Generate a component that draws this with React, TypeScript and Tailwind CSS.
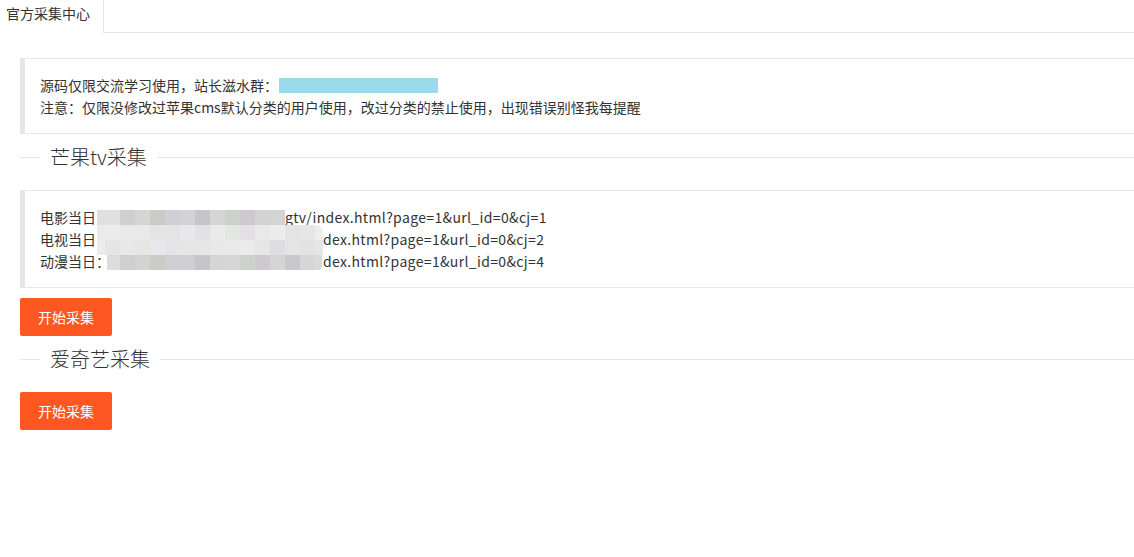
import React from "react";

const FONT = { fontFamily: '"Noto Sans CJK SC", "Liberation Sans", sans-serif' };

const row1 = [
  "bg-[#dfe0e2] w-[8px]",
  "bg-[#e0e0de] w-[15px]",
  "bg-[#cfcfcf] w-[15px]",
  "bg-[#d5d5d3] w-[15px]",
  "bg-[#cacac6] w-[15px]",
  "bg-[#cfcfd5] w-[15px]",
  "bg-[#d2d2d7] w-[15px]",
  "bg-[#c6c6ca] w-[15px]",
  "bg-[#d5d5d5] w-[15px]",
  "bg-[#cbd1cb] w-[15px]",
  "bg-[#cdc9cd] w-[15px]",
  "bg-[#d3d3d3] w-[15px]",
  "bg-[#d4d4d0] w-[15px]",
];
const row2 = [
  "bg-[#ebebeb] w-[8px]",
  "bg-[#ececec] w-[15px]",
  "bg-[#e9e9e9] w-[15px]",
  "bg-[#e9e9e9] w-[15px]",
  "bg-[#e4e4e4] w-[15px]",
  "bg-[#e4e4e4] w-[15px]",
  "bg-[#e8e8ea] w-[15px]",
  "bg-[#e2e2e4] w-[15px]",
  "bg-[#eaeaea] w-[15px]",
  "bg-[#e4e6e4] w-[15px]",
  "bg-[#e2e0e2] w-[15px]",
  "bg-[#e9e9e9] w-[15px]",
  "bg-[#ececec] w-[15px]",
  "bg-[#e4e4e4] w-[15px]",
  "bg-[#e6e6e6] w-[15px]",
  "bg-[#ededed] w-[8px] rounded-tr-[8px]",
];
const row3 = [
  "bg-[#ececec] w-[8px]",
  "bg-[#e5e5e5] w-[15px]",
  "bg-[#e8e8e8] w-[15px]",
  "bg-[#e6e6e4] w-[15px]",
  "bg-[#e8e8ec] w-[15px]",
  "bg-[#e5e5e7] w-[15px]",
  "bg-[#e6e6e6] w-[15px]",
  "bg-[#e6e6e6] w-[15px]",
  "bg-[#e8e8e8] w-[15px]",
  "bg-[#e9e9e9] w-[15px]",
  "bg-[#ebebeb] w-[15px]",
  "bg-[#e6e6e6] w-[15px]",
  "bg-[#dedee0] w-[15px]",
  "bg-[#e4e4e4] w-[15px]",
  "bg-[#e2e2e2] w-[15px]",
  "bg-[#e6e6e6] w-[8px]",
];
const row4 = [
  "bg-[#dcdcdc] w-[13px]",
  "bg-[#cfcfcf] w-[15px]",
  "bg-[#d3d3d3] w-[15px]",
  "bg-[#cbcbc8] w-[15px]",
  "bg-[#cfcfd4] w-[15px]",
  "bg-[#d0d0d4] w-[15px]",
  "bg-[#c6c6ca] w-[15px]",
  "bg-[#d5d5d5] w-[15px]",
  "bg-[#d6d6d6] w-[15px]",
  "bg-[#ccd1cc] w-[15px]",
  "bg-[#cec9ce] w-[15px]",
  "bg-[#d5d5d5] w-[15px]",
  "bg-[#c9c9cd] w-[15px]",
  "bg-[#d6d6d6] w-[15px]",
  "bg-[#dadada] w-[7px] rounded-br-[4px]",
];

function MosaicRow({ cells, offset }: { cells: string[]; offset: string }) {
  return (
    <div className={"flex h-[15px] " + offset}>
      {cells.map((c, i) => (
        <div key={i} className={"h-full shrink-0 " + c} />
      ))}
    </div>
  );
}

function Legend({ title }: { title: string }) {
  return (
    <div className="ml-[20px] flex items-start h-[28px]">
      <div className="w-[20px] h-px bg-[#e6e6e6] mt-[14px]" />
      <div className="px-[10px] text-[20px] leading-[28px] font-light text-[#333]">{title}</div>
      <div className="flex-1 h-px bg-[#e6e6e6] mt-[14px]" />
    </div>
  );
}

function Button() {
  return (
    <button className="ml-[20px] h-[38px] px-[18px] bg-[#ff5722] text-white text-[14px] leading-[38px] rounded-[2px] block">
      开始采集
    </button>
  );
}

function Url({ children }: { children: React.ReactNode }) {
  return <span className="tracking-[0.35px]">{children}</span>;
}

export default function App() {
  return (
    <div className="w-full min-h-[557px] bg-white text-[#333] overflow-hidden" style={FONT}>
      <div className="flex h-[33px]">
        <div className="w-[104px] h-[33px] border-r border-[#e6e6e6] pl-[6px] text-[14px] leading-[26px] text-[#333] bg-white">
          官方采集中心
        </div>
        <div className="flex-1 border-b border-[#e6e6e6]" />
      </div>

      <div className="mt-[25px] ml-[20px] border-y border-[#e8e8e8] border-l-[5px] border-l-[#e6e6e6] p-[15px] text-[14px] leading-[22px]">
        <div className="flex items-center h-[22px]">
          源码仅限交流学习使用，站长滋水群：
          <span className="inline-block w-[159px] h-[15px] bg-[#9cd9ea] ml-[1px]" />
        </div>
        <div className="h-[22px]">注意：仅限没修改过苹果cms默认分类的用户使用，改过分类的禁止使用，出现错误别怪我每提醒</div>
      </div>

      <div className="mt-[9px]">
        <Legend title="芒果tv采集" />
      </div>

      <div className="mt-[19px] ml-[20px] border-y border-[#e8e8e8] border-l-[5px] border-l-[#e6e6e6] p-[15px] text-[14px] leading-[22px]">
        <div className="relative">
          <div className="whitespace-nowrap h-[22px]">
            电影当日<span className="inline-block w-[189px]" />
            <Url>gtv/index.html?page=1&amp;url_id=0&amp;cj=1</Url>
          </div>
          <div className="whitespace-nowrap h-[22px]">
            电视当日<span className="inline-block w-[227px]" />
            <Url>dex.html?page=1&amp;url_id=0&amp;cj=2</Url>
          </div>
          <div className="whitespace-nowrap h-[22px]">
            动漫当日：<span className="inline-block w-[213px]" />
            <Url>dex.html?page=1&amp;url_id=0&amp;cj=4</Url>
          </div>
          <div className="absolute left-[57px] top-[4px] flex flex-col">
            <MosaicRow cells={row1} offset="" />
            <MosaicRow cells={row2} offset="" />
            <MosaicRow cells={row3} offset="" />
            <MosaicRow cells={row4} offset="ml-[10px]" />
          </div>
        </div>
      </div>

      <div className="mt-[10px]">
        <Button />
      </div>

      <div className="mt-[9px]">
        <Legend title="爱奇艺采集" />
      </div>

      <div className="mt-[19px]">
        <Button />
      </div>
    </div>
  );
}
